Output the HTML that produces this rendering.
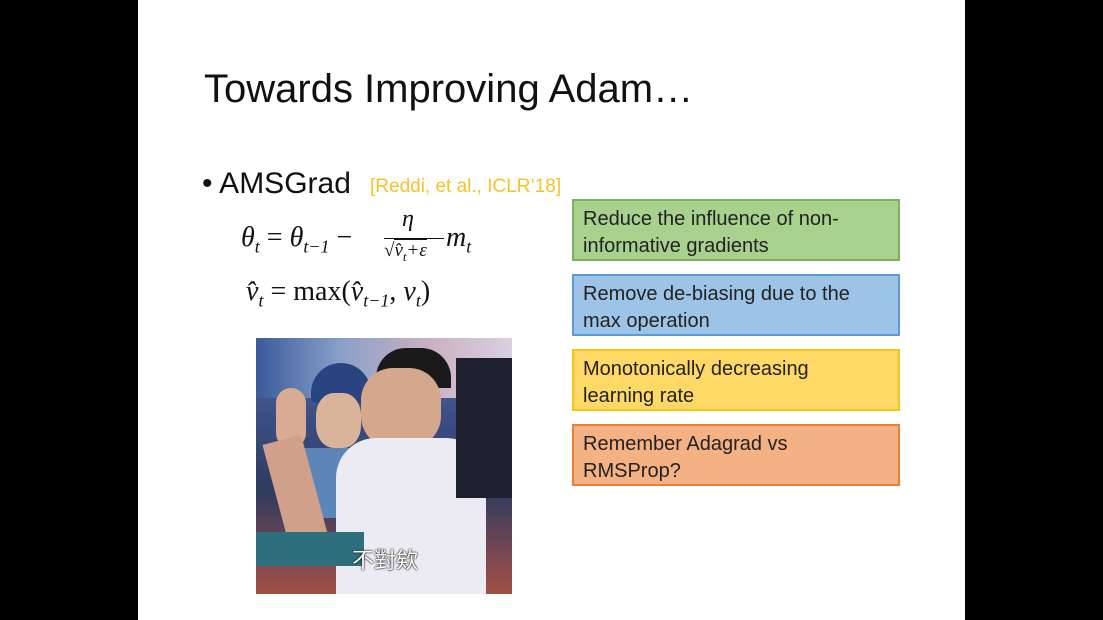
<!DOCTYPE html>
<html><head><meta charset="utf-8"><style>
body{margin:0;width:1103px;height:620px;background:#000;position:relative;overflow:hidden;font-family:"Liberation Sans",sans-serif}
.slide{position:absolute;left:138px;top:0;width:827px;height:620px;background:#fff}
.a{position:absolute;white-space:nowrap}
.box{position:absolute;left:572px;width:306px;height:48px;padding:5px 9px;font-size:20px;line-height:27px;color:#222;border:2px solid}
.m{font-family:"Liberation Serif",serif;font-style:italic;font-size:28px;color:#111}
.m sub{font-size:18px}
.n{font-style:normal}
</style></head><body>
<div class="slide"></div>
<div class="a" style="left:204px;top:67px;font-size:40px;color:#111">Towards Improving Adam…</div>
<div class="a" style="left:202px;top:167px;font-size:30px;color:#111">• AMSGrad</div>
<div class="a" style="left:370px;top:176px;font-size:19px;color:#f6c22a">[Reddi, et al., ICLR’18]</div>
<div class="a m" style="left:241px;top:222px">θ<sub>t</sub><span class="n"> = </span>θ<sub>t−1</sub><span class="n"> − </span></div>
<div class="a m" style="left:402px;top:206px;font-size:24px">η</div>
<div class="a" style="left:384px;top:238px;width:60px;border-top:1.5px solid #111"></div>
<div class="a m" style="left:384px;top:240px;font-size:19px"><span class="n">√</span><span style="border-top:1px solid #111">v̂<sub style="font-size:13px">t</sub>+ε</span></div>
<div class="a m" style="left:446px;top:222px">m<sub>t</sub></div>
<div class="a m" style="left:246px;top:276px">v̂<sub>t</sub><span class="n"> = max(</span>v̂<sub>t−1</sub><span class="n">, </span>v<sub>t</sub><span class="n">)</span></div>
<div class="a" style="left:256px;top:338px;width:256px;height:256px;overflow:hidden;background:linear-gradient(180deg,#5a6d9a 0%,#3c4f86 30%,#2f3b5e 60%,#8a4a50 90%,#a05040 100%)">
 <div class="a" style="left:0;top:0;width:256px;height:60px;background:linear-gradient(90deg,#3a5a9a,#8aa0c8,#c9b0c0,#d8d0e0)"></div>
 <div class="a" style="left:55px;top:25px;width:60px;height:40px;border-radius:30px 30px 5px 5px;background:#2a4482"></div>
 <div class="a" style="left:60px;top:55px;width:45px;height:55px;border-radius:40%;background:#d9b49a"></div>
 <div class="a" style="left:45px;top:110px;width:80px;height:70px;background:#5c86b8"></div>
 <div class="a" style="left:120px;top:10px;width:75px;height:40px;border-radius:30px 30px 0 0;background:#1a1a1a"></div>
 <div class="a" style="left:105px;top:30px;width:80px;height:80px;border-radius:40%;background:#d4a88c"></div>
 <div class="a" style="left:80px;top:100px;width:150px;height:160px;border-radius:40px 40px 0 0;background:#eceaf2"></div>
 <div class="a" style="left:20px;top:50px;width:30px;height:60px;border-radius:15px;background:#d9ab92"></div>
 <div class="a" style="left:20px;top:100px;width:40px;height:110px;background:#d0a08a;transform:rotate(-15deg)"></div>
 <div class="a" style="left:200px;top:20px;width:56px;height:140px;background:#1e2030"></div>
 <div class="a" style="left:0;top:194px;width:108px;height:34px;background:#2e6f7e"></div>
 <div class="a" style="left:96px;top:205px;font-size:22px;color:#fff;font-family:'Liberation Sans','Noto Sans CJK TC',sans-serif;text-shadow:0 0 2px #000,0 0 1px #000">不對欸</div>
</div>
<div class="box" style="top:199px;background:#a9d18e;border-color:#7fb05f">Reduce the influence of non-<br>informative gradients</div>
<div class="box" style="top:274px;background:#9dc3e6;border-color:#5b9bd5">Remove de-biasing due to the<br>max operation</div>
<div class="box" style="top:349px;background:#ffd966;border-color:#f5c518">Monotonically decreasing<br>learning rate</div>
<div class="box" style="top:424px;background:#f4b183;border-color:#ed7d31">Remember Adagrad vs<br>RMSProp?</div>
</body></html>
